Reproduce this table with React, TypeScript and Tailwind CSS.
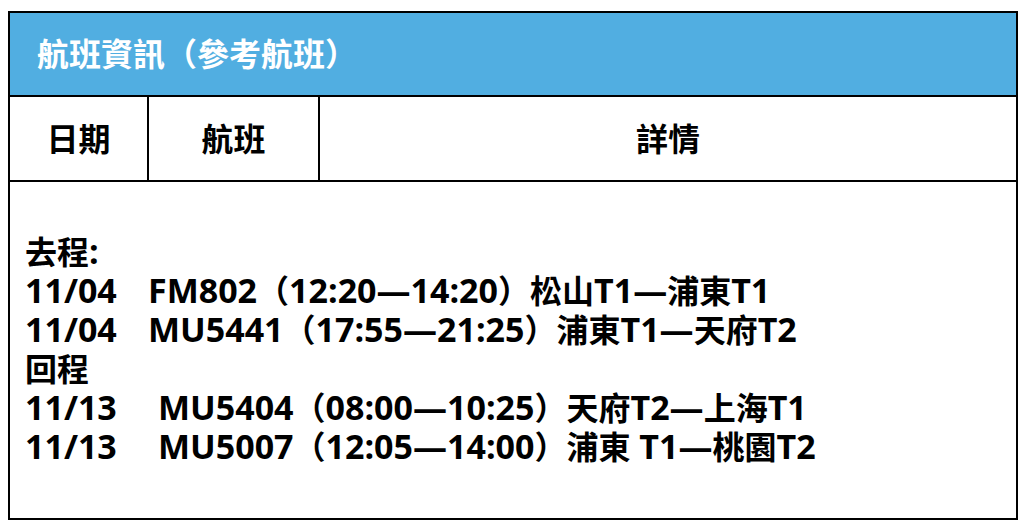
const CJK = /([\u3000-\u9fff\uff00-\uffef]+)/

// CJK runs are set a little smaller than the Latin runs, like the original font does
function Mixed({ text }: { text: string }) {
  return (
    <>
      {text.split(CJK).filter(Boolean).map((part, i) =>
        CJK.test(part)
          ? <span key={i} className="inline-block h-[39px] text-[32px] leading-[39px]">{part}</span>
          : <span key={i} className="inline-block h-[39px] leading-[39px]">{part}</span>
      )}
    </>
  )
}

const outbound = [
  { date: '11/04', rest: 'FM802（12:20—14:20）松山T1—浦東T1' },
  { date: '11/04', rest: 'MU5441（17:55—21:25）浦東T1—天府T2' },
]
const inbound = [
  { date: '11/13', rest: 'MU5404（08:00—10:25）天府T2—上海T1' },
  { date: '11/13', rest: 'MU5007（12:05—14:00）浦東 T1—桃園T2' },
]

export default function App() {
  const font = { fontFamily: '"Open Sans", "Noto Sans CJK TC", sans-serif' }
  return (
    <div className="w-[1024px] h-[529px] bg-white pt-[11px] pl-[8px]" style={font}>
      <div className="w-[1010px] h-[509px] border-2 border-black flex flex-col font-bold">
        <div className="h-[84px] shrink-0 bg-[#51aee1] border-b-2 border-black flex items-center pl-[27px] text-white text-[32px]">
          航班資訊（參考航班）
        </div>

        {/* 表頭 */}
        <div className="h-[85px] shrink-0 border-b-2 border-black flex text-[32px] text-black">
          <div className="w-[139px] border-r-2 border-black flex items-center justify-center">日期</div>
          <div className="w-[171px] border-r-2 border-black flex items-center justify-center">航班</div>
          <div className="flex-1 flex items-center justify-center">詳情</div>
        </div>

        <div className="flex-1 pt-[50px] pl-[15px] text-[34px] leading-[39px] text-black whitespace-pre">
          <div className="h-[39px] text-[32px]">去程<span className="text-[34px]">:</span></div>
          {outbound.map((f, i) => (
            <div key={i} className="h-[39px] flex items-center">
              <span className="inline-block w-[123px] h-[39px] leading-[39px]">{f.date}</span>
              <Mixed text={f.rest} />
            </div>
          ))}
          <div className="h-[39px] text-[32px]">回程</div>
          {inbound.map((f, i) => (
            <div key={i} className="h-[39px] flex items-center">
              <span className="inline-block w-[133px] h-[39px] leading-[39px]">{f.date}</span>
              <Mixed text={f.rest} />
            </div>
          ))}
        </div>
      </div>
    </div>
  )
}
